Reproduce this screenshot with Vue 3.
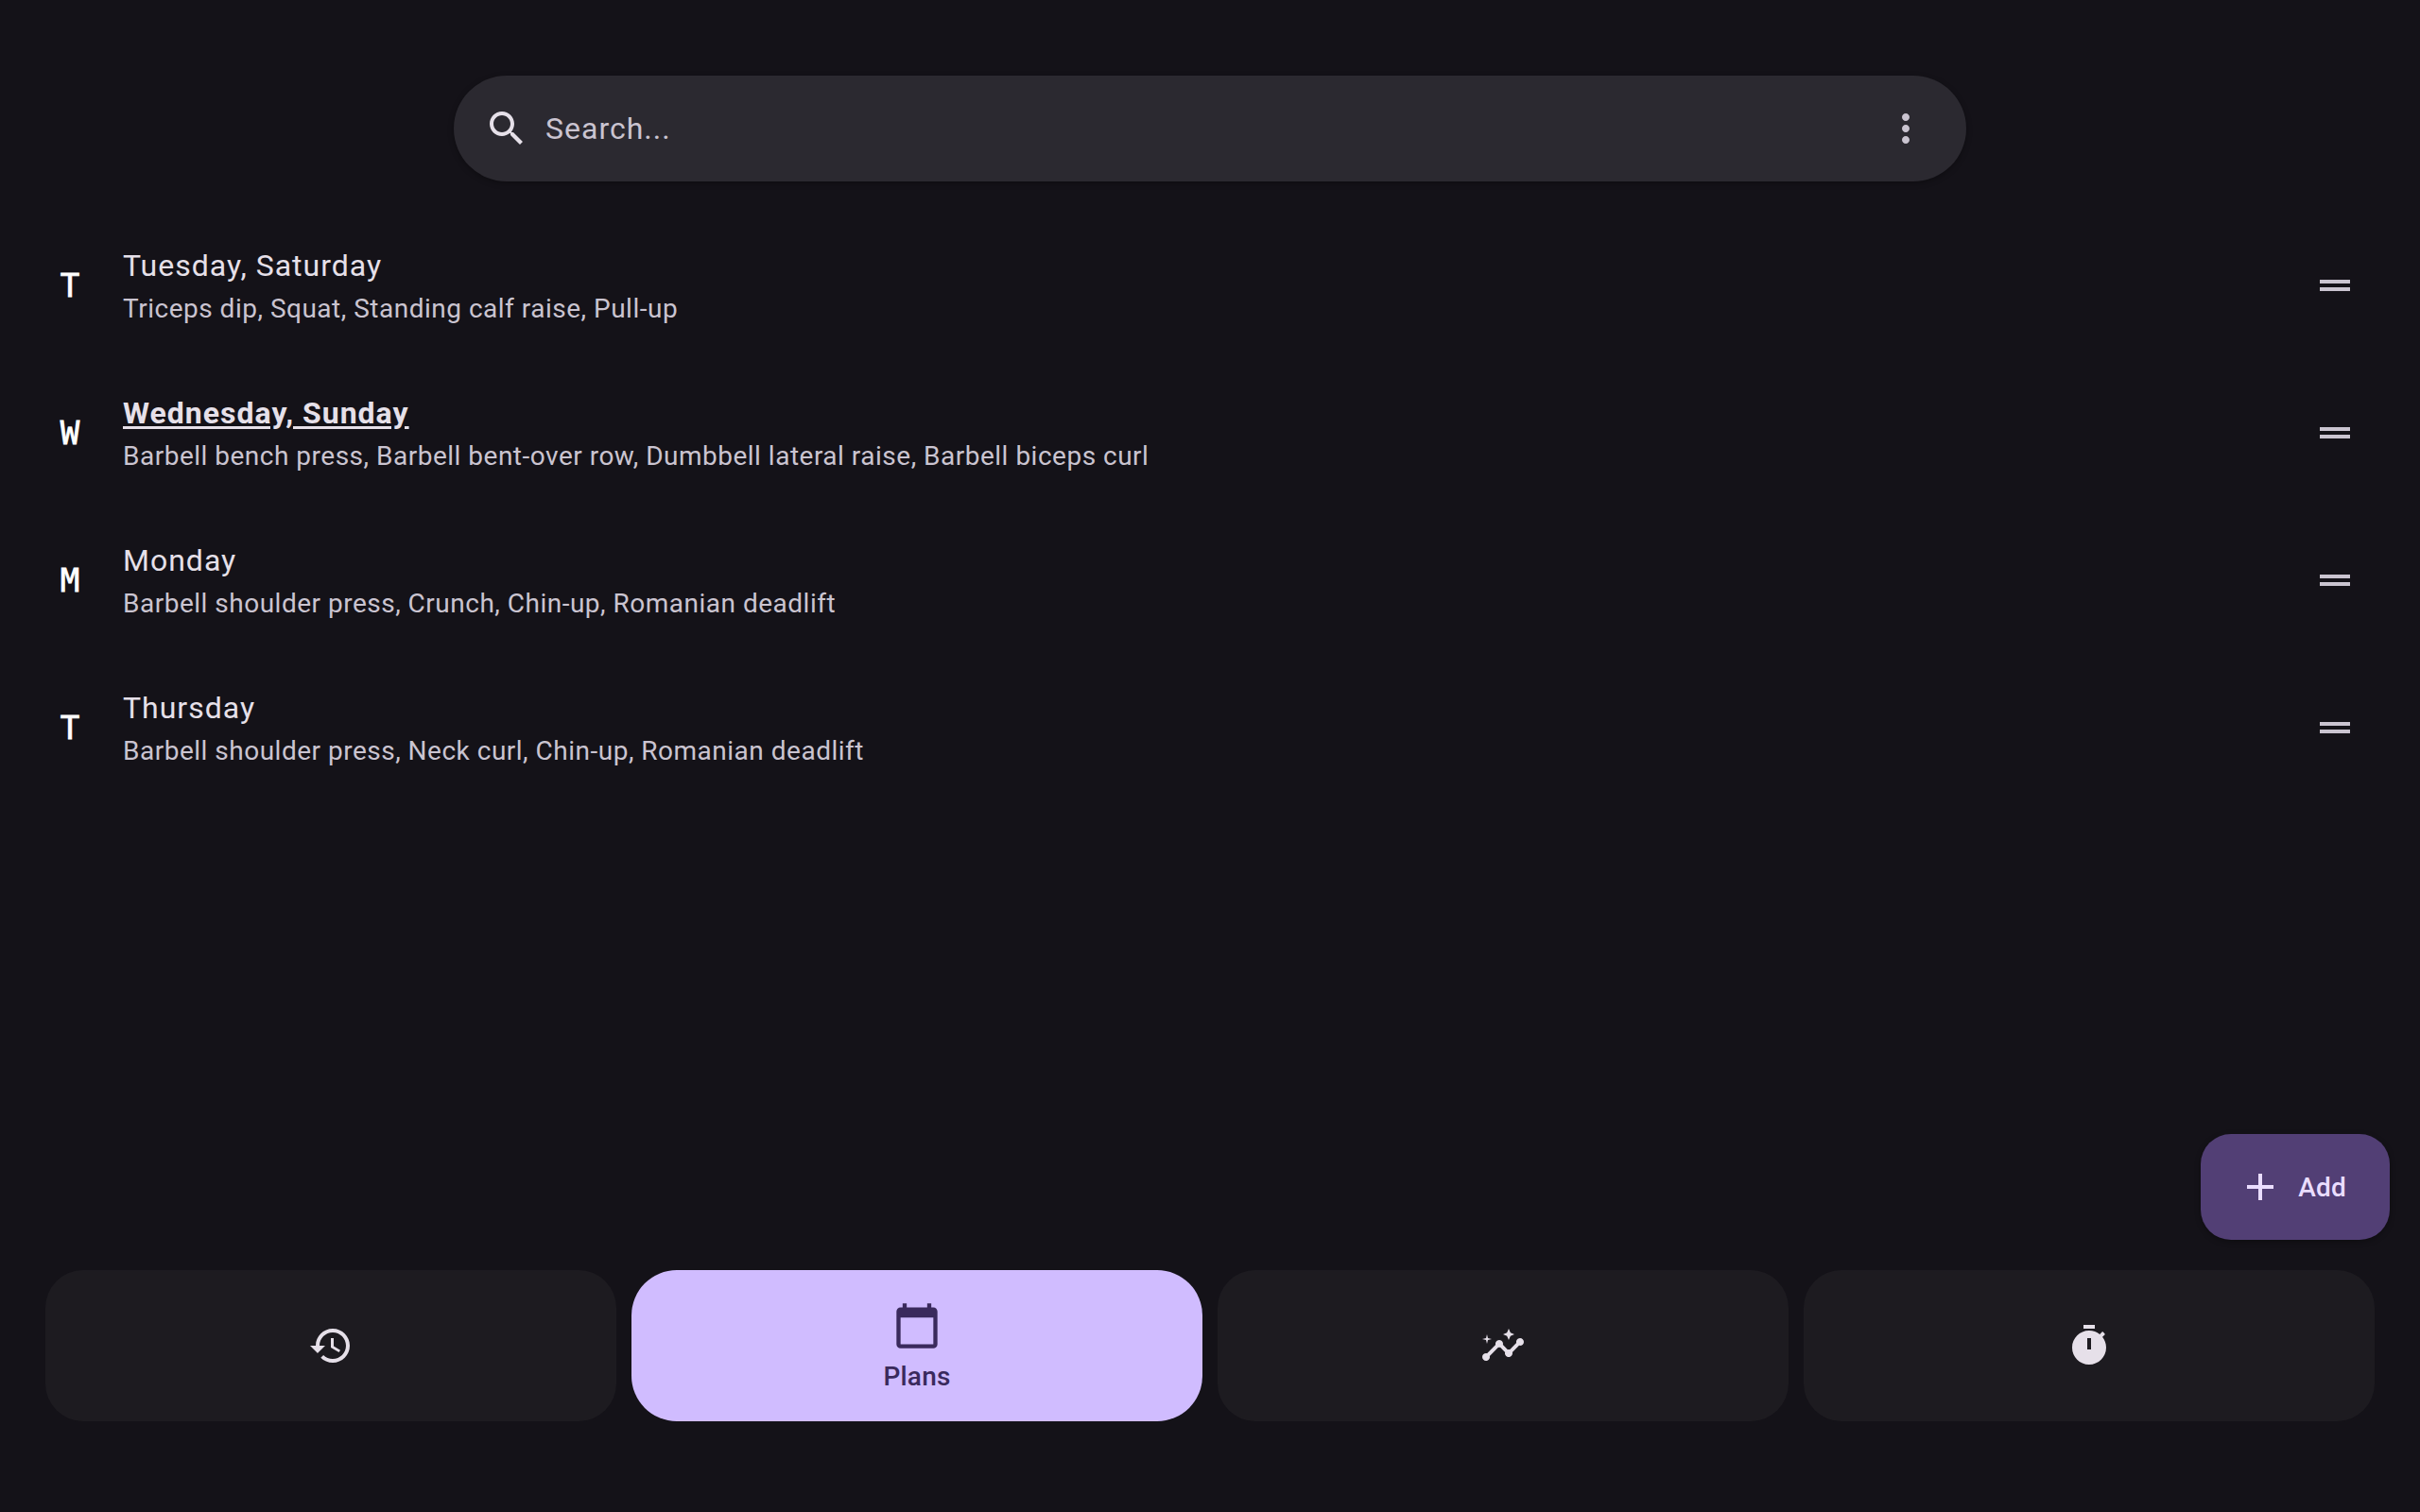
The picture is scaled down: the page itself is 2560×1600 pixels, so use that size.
<template>
  <div class="page">
    <div class="search-bar">
      <svg class="icon search-icon" viewBox="0 0 24 24"><path d="M15.5 14h-.79l-.28-.27C15.41 12.59 16 11.11 16 9.5 16 5.91 13.09 3 9.5 3S3 5.91 3 9.5 5.91 16 9.5 16c1.61 0 3.09-.59 4.23-1.57l.27.28v.79l5 4.99L20.49 19l-4.99-5zm-6 0C7.01 14 5 11.99 5 9.5S7.01 5 9.5 5 14 7.01 14 9.5 11.99 14 9.5 14z" /></svg>
      <span class="search-text">Search...</span>
      <svg class="icon more-icon" viewBox="0 0 24 24"><path d="M12 8c1.1 0 2-.9 2-2s-.9-2-2-2-2 .9-2 2 .9 2 2 2zm0 2c-1.1 0-2 .9-2 2s.9 2 2 2 2-.9 2-2-.9-2-2-2zm0 6c-1.1 0-2 .9-2 2s.9 2 2 2 2-.9 2-2-.9-2-2-2z" /></svg>
    </div>

    <ul class="plan-list">
      <li v-for="plan in plans" :key="plan.days" class="plan-row">
        <span class="plan-letter">{{ plan.days[0] }}</span>
        <div class="plan-text">
          <div class="plan-days" :class="{ today: plan.today }">{{ plan.days }}</div>
          <div class="plan-exercises">{{ plan.exercises }}</div>
        </div>
        <svg class="icon drag-icon" viewBox="0 0 24 24"><path d="M20 9H4v2h16V9zm0 4H4v2h16v-2z" /></svg>
      </li>
    </ul>

    <button class="fab">
      <svg class="icon" viewBox="0 0 24 24"><path d="M19 13h-6v6h-2v-6H5v-2h6V5h2v6h6v2z" /></svg>
      <span>Add</span>
    </button>

    <nav class="bottom-nav">
      <div class="nav-item">
        <svg class="icon" viewBox="0 0 24 24"><path d="M13 3c-4.97 0-9 4.03-9 9H1l3.89 3.89.07.14L9 12H6c0-3.87 3.13-7 7-7s7 3.13 7 7-3.13 7-7 7c-1.93 0-3.68-.79-4.94-2.06l-1.42 1.42C8.27 19.99 10.51 21 13 21c4.97 0 9-4.03 9-9s-4.03-9-9-9zm-1 5v5l4.28 2.54.72-1.21-3.5-2.08V8H12z" /></svg>
      </div>
      <div class="nav-item active">
        <svg class="icon calendar-icon" viewBox="0 0 24 24"><path d="M20 3h-1V1h-2v2H7V1H5v2H4c-1.1 0-2 .9-2 2v16c0 1.1.9 2 2 2h16c1.1 0 2-.9 2-2V5c0-1.1-.9-2-2-2zm0 18H4V8h16v13z" /></svg>
        <span class="nav-label">Plans</span>
      </div>
      <div class="nav-item">
        <svg class="icon" viewBox="0 0 24 24"><path d="M21 8c-1.45 0-2.26 1.44-1.93 2.51l-3.55 3.56c-.3-.09-.74-.09-1.04 0l-2.55-2.55C12.27 10.45 11.46 9 10 9c-1.45 0-2.27 1.44-1.93 2.52l-4.56 4.55C2.44 15.74 1 16.55 1 18c0 1.1.9 2 2 2 1.45 0 2.26-1.44 1.93-2.51l4.55-4.56c.3.09.74.09 1.04 0l2.55 2.55C12.73 16.55 13.54 18 15 18c1.45 0 2.27-1.44 1.93-2.52l3.56-3.55c1.07.33 2.51-.48 2.51-1.93 0-1.1-.9-2-2-2z" /><path d="M15 9l.94-2.07L18 6l-2.06-.93L15 3l-.92 2.07L12 6l2.08.93zM3.5 11L4 9l2-.5L4 8l-.5-2L3 8l-2 .5L3 9z" /></svg>
      </div>
      <div class="nav-item">
        <svg class="icon" viewBox="0 0 24 24"><path d="M9 1h6v2H9z" /><path d="M19.03 7.39l1.42-1.42c-.43-.51-.9-.99-1.41-1.41l-1.42 1.42C16.07 4.74 14.12 4 12 4c-4.97 0-9 4.03-9 9s4.02 9 9 9 9-4.03 9-9c0-2.12-.74-4.07-1.97-5.61zM13 14h-2V8h2v6z" /></svg>
      </div>
    </nav>
  </div>
</template>

<script setup>
const plans = [
  { days: 'Tuesday, Saturday', exercises: 'Triceps dip, Squat, Standing calf raise, Pull-up' },
  { days: 'Wednesday, Sunday', exercises: 'Barbell bench press, Barbell bent-over row, Dumbbell lateral raise, Barbell biceps curl', today: true },
  { days: 'Monday', exercises: 'Barbell shoulder press, Crunch, Chin-up, Romanian deadlift' },
  { days: 'Thursday', exercises: 'Barbell shoulder press, Neck curl, Chin-up, Romanian deadlift' },
];
</script>

<style>
html, body {
  margin: 0;
  background: #141218;
}
</style>

<style scoped>
.page {
  display: flex;
  flex-direction: column;
  height: 1600px;
  box-sizing: border-box;
  padding-top: 80px;
  padding-bottom: 96px;
  background: #141218;
  color: #e6e0e9;
  font-family: Roboto, "Liberation Sans", sans-serif;
}

.icon {
  width: 48px;
  height: 48px;
  flex: none;
  fill: currentColor;
}

.search-bar {
  display: flex;
  align-items: center;
  align-self: center;
  width: 1600px;
  height: 112px;
  flex: none;
  box-sizing: border-box;
  padding: 0 40px 0 32px;
  border-radius: 56px;
  background: #2b2930;
  box-shadow: 0 2px 6px rgba(0, 0, 0, 0.3);
}

.search-text {
  flex: 1;
  margin-left: 17px;
  font-size: 32px;
  letter-spacing: 1px;
  color: #cac4d0;
}

.more-icon {
  color: #cac4d0;
}

.plan-list {
  flex: 1;
  margin: 32px 0 0;
  padding: 0;
  list-style: none;
}

.plan-row {
  display: flex;
  align-items: center;
  height: 156px;
  padding-left: 49px;
  padding-right: 66px;
}

.plan-letter {
  width: 50px;
  flex: none;
  margin-right: 31px;
  font-family: "DejaVu Sans Mono", monospace;
  font-size: 34px;
  text-align: center;
  color: #fff;
  -webkit-text-stroke: 0.8px #fff;
}

.plan-text {
  display: flex;
  flex: 1;
  flex-direction: column;
  gap: 3px;
}

.plan-days {
  font-size: 32px;
  line-height: 46px;
  letter-spacing: 1px;
}

.plan-days.today {
  font-weight: 700;
  text-decoration: underline;
  text-underline-offset: 3px;
}

.plan-exercises {
  font-size: 28px;
  line-height: 40px;
  letter-spacing: 0.5px;
  color: #cac4d0;
}

.drag-icon {
  color: #cac4d0;
}

.fab {
  display: flex;
  align-items: center;
  align-self: flex-end;
  gap: 16px;
  height: 112px;
  flex: none;
  box-sizing: border-box;
  margin-right: 32px;
  padding: 0 46px 0 39px;
  border: 0;
  border-radius: 32px;
  background: #523f75;
  color: #eaddff;
  font-family: inherit;
  font-size: 28px;
  font-weight: 500;
  letter-spacing: 0.2px;
  box-shadow: 0 2px 6px rgba(0, 0, 0, 0.3);
}

.bottom-nav {
  display: flex;
  gap: 16px;
  flex: none;
  margin-top: 32px;
  padding: 0 48px;
}

.nav-item {
  display: flex;
  flex: 1;
  flex-direction: column;
  align-items: center;
  justify-content: center;
  height: 160px;
  border-radius: 40px;
  background: #1d1b20;
}

.nav-item.active {
  border-radius: 48px;
  background: #d0bcff;
  color: #3a2a5c;
}

.calendar-icon {
  width: 52px;
  height: 52px;
  margin-top: 6px;
}

.nav-label {
  margin-top: 8px;
  font-size: 28px;
  line-height: 40px;
  font-weight: 500;
  letter-spacing: 0.2px;
}
</style>
